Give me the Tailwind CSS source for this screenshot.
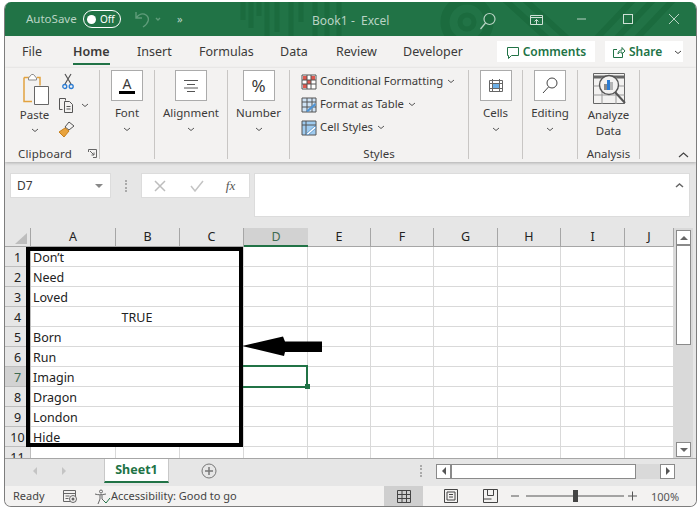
<!DOCTYPE html>
<html lang="en">
<head>
<meta charset="UTF-8" />
<title>Book1 - Excel</title>
<script src="https://cdn.jsdelivr.net/npm/@tailwindcss/browser@4"></script>
</head>
<body class="bg-white w-[700px] h-[511px] overflow-hidden font-['Noto_Sans',sans-serif] text-[#3b3a39]">
<div class="ml-[4px] mt-[2px] w-[693px] h-[505px] border border-[#7d7d7d] border-t-0 rounded-[7px] overflow-hidden flex flex-col bg-[#f3f2f1]">

  <!-- title bar -->
  <div class="relative h-[34px] shrink-0 bg-[#217346] flex items-center text-[12px] text-[#b9d3c4]">
    <svg class="absolute left-0 top-0" width="693" height="34" fill="none" stroke="#1b6b3e">
      <path d="M238 0v18M246 0v26M254 0v14M262 0v34M272 0v30M286 0v34M296 0v20M310 0v34M322 0v34M334 0v34" stroke-width="5"/>
      <circle cx="462" cy="20" r="22" stroke-width="9"/>
      <circle cx="462" cy="20" r="7" stroke-width="5"/>
      <path d="M500 -2l44 40M520 -2l44 40M590 38l40-42M610 38l40-42M630 38l40-42" stroke-width="6"/>
    </svg>
    <span class="relative ml-[21px] w-[57px] text-[11.500px]">AutoSave</span>
    <span class="relative w-[38px] h-[18px] rounded-full border-[1.5px] border-white flex items-center pl-[3px] gap-[4px] text-[10px] text-white"><i class="w-[9px] h-[9px] rounded-full bg-white"></i>Off</span>
    <svg class="relative ml-[13px]" width="32" height="20" fill="none" stroke="#5f9c7a" stroke-width="1.4"><path d="M2 3v6h6M2 9c3-4 7-5 10-3 4 3 3 8-3 12"/><path d="M22 9l2 2 2-2"/></svg>
    <span class="relative ml-[11px] text-[#b9d3c4] text-[11px]">»</span>
    <span class="absolute left-[307px] top-[10px]">Book1</span>
    <span class="absolute left-[346px] top-[10px]">-</span>
    <span class="absolute left-[352px] top-[10px] ml-[4px]">Excel</span>
    <svg class="absolute left-[474px] top-[10px]" width="18" height="20" fill="none" stroke="#b9d3c4" stroke-width="1.2"><circle cx="10.500" cy="7" r="5.500"/><path d="M6.500 11l-5 6"/></svg>
    <svg class="absolute left-[524px] top-[11px]" width="16" height="14" fill="none" stroke="#cfe0d6"><path d="M1.500 2.500h12v9h-12zM1.500 4.500h12M7.500 11V6.500M5.500 8.500l2-2 2 2"/></svg>
    <svg class="absolute left-[572px] top-[14px]" width="9" height="6" stroke="#b9d3c4"><path d="M0 3h9"/></svg>
    <svg class="absolute left-[617px] top-[11px]" width="12" height="12" fill="none" stroke="#cfe0d6"><rect x="1.500" y="1.500" width="9" height="9"/></svg>
    <svg class="absolute left-[663px] top-[11px]" width="12" height="12" stroke="#b9d3c4"><path d="M1 1l10 10M11 1L1 11"/></svg>
  </div>

  <!-- tabs -->
  <div class="relative h-[32px] shrink-0 flex items-center pt-[1px] text-[12.500px]">
    <span class="ml-[17px] w-[51px]">File</span>
    <span class="relative w-[64px] font-semibold">Home<i class="absolute left-0 top-[20px] w-[37px] h-[2px] bg-[#217346]"></i></span>
    <span class="w-[62px]">Insert</span>
    <span class="w-[81px]">Formulas</span>
    <span class="w-[56px]">Data</span>
    <span class="w-[67px]">Review</span>
    <span>Developer</span>
    <span class="absolute left-[492px] top-[5px] w-[98px] h-[21px] bg-white flex items-center justify-center pt-[1px] gap-[3px] text-[12px] font-semibold text-[#217346]">
      <svg width="14" height="13" fill="none" stroke="#217346"><path d="M1.500 1.500h11v8h-7l-3 3v-3h-1z"/></svg>Comments</span>
    <span class="absolute left-[600px] top-[5px] w-[78px] h-[21px] bg-white flex items-center pl-[7px] pt-[1px] gap-[3px] text-[12px] font-semibold text-[#217346]">
      <svg width="14" height="13" fill="none" stroke="#217346"><path d="M5 3.500H1.500v8h9V8M6 8c0-3 2-4 4-4V1.500l3 3.500-3 3V6c-2 0-3 .5-4 2z"/></svg>Share
      <svg class="ml-[9px]" width="8" height="5" fill="none" stroke="#444"><path d="M1 1l3 2.500L7 1"/></svg></span>
  </div>

  <!-- ribbon -->
  <div class="relative h-[94px] shrink-0 pt-[2px] flex text-[11.500px] shadow-[0_1px_3px_rgba(0,0,0,0.25)] z-10">
    <!-- clipboard -->
    <div class="relative w-[95px] h-[89px] border-r border-[#c8c6c4] flex flex-col">
      <div class="flex flex-1">
        <div class="w-[50px] flex flex-col items-center pl-[9px]">
          <svg class="mt-[3px] ml-[5px]" width="30" height="32" fill="none"><path d="M2 4.500h5M15 4.500h3v8M2 4.500v24h8" stroke="#e2a23f" stroke-width="1.500"/><path d="M6.500 5l3-3.500h2l3 3.500v2h-8z" fill="#fff" stroke="#8a8a8a"/><path d="M12.500 13.500h14v18h-14z" fill="#fff" stroke="#666"/></svg>
          <span class="mt-[1px] leading-[17px]">Paste</span>
          <svg class="mt-[5px]" width="8" height="5" fill="none" stroke="#555"><path d="M1 1l3 2.500L7 1"/></svg>
        </div>
        <div class="flex flex-col pl-[3px]">
          <svg class="mt-[3px] ml-[4px]" width="12" height="17" fill="none"><path d="M3 1l6 10M9 1L3 11" stroke="#555" stroke-width="1.200"/><circle cx="2.800" cy="13.500" r="2" stroke="#2b7cd3" stroke-width="1.300"/><circle cx="9.200" cy="13.500" r="2" stroke="#2b7cd3" stroke-width="1.300"/></svg>
          <div class="flex items-center mt-[7px]">
            <svg width="18" height="17" fill="none" stroke="#555"><path d="M4.500 12.500h-3v-11h6v2M6.500 4.500h5l3 3v8h-8zM8.500 9.500h4M8.500 12h4"/></svg>
            <svg class="ml-[5px]" width="8" height="5" fill="none" stroke="#555"><path d="M1 1l3 2.500L7 1"/></svg>
          </div>
          <svg class="mt-[7px]" width="18" height="17" fill="none"><path d="M11 1l5 4-5 4-4-3z" stroke="#555"/><path d="M7 7l4 3-5 6-5-5z" fill="#e8a33d" stroke="#c77f1a"/></svg>
        </div>
      </div>
      <div class="mt-auto h-[10px] leading-[10px] text-center pr-[14px] tracking-[0.2px]">Clipboard</div>
      <svg class="absolute left-[83px] top-[79px]" width="9" height="9" fill="none" stroke="#666"><path d="M.5 3V.5h8v8H5M2 2l4 4M6 3.500V6H3.500"/></svg>
    </div>
    <!-- font -->
    <div class="w-[55px] h-[89px] border-r border-[#c8c6c4] flex flex-col items-center">
      <div class="w-[32px] h-[31px] bg-white border border-[#ababab] flex flex-col items-center justify-center">
        <span class="text-[14px] leading-[14px]">A</span><i class="w-[16px] h-[3px] bg-black"></i>
      </div>
      <span class="mt-[3px] leading-[17px]">Font</span>
      <svg class="mt-[6px]" width="8" height="5" fill="none" stroke="#555"><path d="M1 1l3 2.500L7 1"/></svg>
    </div>
    <!-- alignment -->
    <div class="w-[73px] h-[89px] border-r border-[#c8c6c4] flex flex-col items-center">
      <div class="w-[32px] h-[31px] bg-white border border-[#ababab] flex items-center justify-center">
        <svg width="14" height="12" stroke="#555"><path d="M0 .5h14M3 4.500h8M0 8h14M3 11.500h8"/></svg>
      </div>
      <span class="mt-[3px] leading-[17px]">Alignment</span>
      <svg class="mt-[6px]" width="8" height="5" fill="none" stroke="#555"><path d="M1 1l3 2.500L7 1"/></svg>
    </div>
    <!-- number -->
    <div class="w-[62px] h-[89px] border-r border-[#c8c6c4] flex flex-col items-center">
      <div class="w-[32px] h-[31px] bg-white border border-[#ababab] flex items-center justify-center text-[17px]">%</div>
      <span class="mt-[3px] leading-[17px]">Number</span>
      <svg class="mt-[6px]" width="8" height="5" fill="none" stroke="#555"><path d="M1 1l3 2.500L7 1"/></svg>
    </div>
    <!-- styles -->
    <div class="w-[179px] h-[89px] border-r border-[#c8c6c4] flex flex-col pl-[11px] text-[11.300px]">
      <div class="h-[23px] flex items-center gap-[3px]">
        <svg width="16" height="16" fill="none"><path d="M1 1h14v14H1z" fill="#fff" stroke="#555"/><path d="M2 2h4v4H2zM10 2h4v4h-4zM6 6h4v4H6zM2 10h4v4H2z" fill="#e0584f"/><path d="M6 1v14M10 1v14M1 6h14M1 10h14" stroke="#555"/></svg>
        <span>Conditional Formatting</span><svg class="ml-[1px]" width="8" height="5" fill="none" stroke="#555"><path d="M1 1l3 2.500L7 1"/></svg>
      </div>
      <div class="h-[23px] flex items-center gap-[3px]">
        <svg width="16" height="16" fill="none"><path d="M1 1h14v14H1z" fill="#cfe3f5" stroke="#555"/><path d="M1 5h14M6 1v14M11 1v14M1 10h14" stroke="#555"/><path d="M5 14l9-8 1 2-8 7z" fill="#4f94d4"/></svg>
        <span>Format as Table</span><svg class="ml-[1px]" width="8" height="5" fill="none" stroke="#555"><path d="M1 1l3 2.500L7 1"/></svg>
      </div>
      <div class="h-[23px] flex items-center gap-[3px]">
        <svg width="16" height="16" fill="none"><path d="M1 1h14v14H1z" fill="#9fcbef" stroke="#555"/><path d="M1 5h14M5 1v14" stroke="#555"/><path d="M5 14l9-8 1 2-8 7z" fill="#fff" stroke="#3f7fbd" stroke-width=".7"/></svg>
        <span>Cell Styles</span><svg class="ml-[1px]" width="8" height="5" fill="none" stroke="#555"><path d="M1 1l3 2.500L7 1"/></svg>
      </div>
      <div class="mt-auto h-[10px] leading-[10px] text-center pr-[11px] text-[11.500px]">Styles</div>
    </div>
    <!-- cells -->
    <div class="w-[54px] h-[89px] border-r border-[#c8c6c4] flex flex-col items-center">
      <div class="w-[32px] h-[31px] bg-white border border-[#ababab] flex items-center justify-center">
        <svg width="16" height="15" fill="none"><path d="M1.500 2.500h13v11h-13z" stroke="#666"/><path d="M4.500 5.500h7v5h-7z" fill="#6cb0e8"/><path d="M4.500 1v13M11.500 1v13M1 5.500h14M1 10.500h14" stroke="#666"/></svg>
      </div>
      <span class="mt-[3px] leading-[17px]">Cells</span>
      <svg class="mt-[6px]" width="8" height="5" fill="none" stroke="#555"><path d="M1 1l3 2.500L7 1"/></svg>
    </div>
    <!-- editing -->
    <div class="w-[55px] h-[89px] border-r border-[#c8c6c4] flex flex-col items-center">
      <div class="w-[32px] h-[31px] bg-white border border-[#ababab] flex items-center justify-center">
        <svg width="16" height="17" fill="none" stroke="#444"><circle cx="10" cy="6" r="5"/><path d="M6.500 10L1 16"/></svg>
      </div>
      <span class="mt-[3px] leading-[17px]">Editing</span>
      <svg class="mt-[6px]" width="8" height="5" fill="none" stroke="#555"><path d="M1 1l3 2.500L7 1"/></svg>
    </div>
    <!-- analysis -->
    <div class="w-[62px] h-[89px] border-r border-[#c8c6c4] flex flex-col items-center leading-[16px]">
      <svg class="mt-[2px]" width="34" height="33" fill="none">
        <path d="M1.500 1.500h31v30h-31z" stroke="#666"/><path d="M1.500 5h31" stroke="#666" stroke-width="3"/><path d="M1.500 14h31M1.500 23h31M10 5v27M24 5v27" stroke="#999"/>
        <circle cx="17" cy="13" r="9.500" fill="#f3f2f1" stroke="#555" stroke-width="1.400"/>
        <path d="M12 12h3v6h-3z" fill="#8a8a8a"/><path d="M15 8h3v10h-3z" fill="#2b7cd3"/><path d="M18 10h3v8h-3z" fill="#b5b5b5"/>
        <path d="M23 20l10 11" stroke="#555" stroke-width="2"/>
      </svg>
      <span class="mt-[2px]">Analyze</span>
      <span>Data</span>
      <span class="mt-auto h-[10px] leading-[10px]">Analysis</span>
    </div>
    <svg class="absolute left-[673px] top-[83px]" width="11" height="7" fill="none" stroke="#444" stroke-width="1.200"><path d="M1 6l4.500-4L10 6"/></svg>
  </div>

  <!-- formula bar -->
  <div class="h-[66px] shrink-0 bg-[#e6e6e6] pt-[11px] pl-[5px] pr-[6px] flex items-start">
    <div class="w-[101px] h-[25px] bg-white border border-[#dcdcdc] flex items-center justify-between pl-[6px] pr-[7px] text-[12px]">D7<i class="border-x-[4px] border-x-transparent border-t-[4px] border-t-[#888]"></i></div>
    <div class="w-[30px] h-[25px] flex items-center justify-center"><i class="w-[2px] h-[12px] border-l-2 border-dotted border-[#aaa]"></i></div>
    <div class="w-[109px] h-[25px] bg-white border border-[#dcdcdc] flex items-center">
      <svg class="ml-[12px]" width="12" height="12" stroke="#bdbdbd" stroke-width="1.500"><path d="M1 1l10 10M11 1L1 11"/></svg>
      <svg class="ml-[24px]" width="14" height="12" fill="none" stroke="#c4c4c4" stroke-width="1.500"><path d="M1 6l4 5 8-10"/></svg>
      <span class="ml-[22px] font-['Liberation_Serif',serif] italic text-[13px] text-[#555]">fx</span>
    </div>
    <div class="relative ml-[4px] w-[437px] h-[44px] bg-white border border-[#dcdcdc]">
      <svg class="absolute right-[5px] top-[8px]" width="9" height="6" fill="none" stroke="#666" stroke-width="1.500"><path d="M1 5l3.500-3L8 5"/></svg>
    </div>
  </div>

  <!-- sheet -->
  <div class="relative h-[230px] shrink-0 bg-[#e6e6e6] flex">
    <div class="relative w-[669px] h-[230px] overflow-hidden">
      <div id="grid" class="grid grid-cols-[26px_85px_64px_64px_64px_63px_63px_64px_63px_64px_49px] grid-rows-[19px_repeat(11,20px)] text-[12.500px] text-[#222]"></div>
      <!-- selected cell -->
      <div class="absolute left-[238px] top-[137px] w-[65px] h-[23px] border-2 border-l-0 border-[#217346]"></div>
      <i class="absolute left-[300px] top-[156px] w-[5px] h-[5px] bg-[#217346]"></i>
      <!-- black highlight box -->
      <div class="absolute left-[21px] top-[19px] w-[217px] h-[200px] border-[4.500px] border-black"></div>
      <svg class="absolute left-[237px] top-[105px]" width="80" height="24"><path d="M0 13L41 3.500 43 8.500H80V19H43L42 23z" fill="#000"/></svg>
    </div>
    <!-- vertical scrollbar -->
    <div class="w-[19px] h-[230px] bg-[#d9d9d9] flex flex-col items-center pt-[2px]">
      <div class="w-[15px] h-[15px] bg-white border border-[#8a8a8a] flex items-center justify-center"><i class="border-x-[4px] border-x-transparent border-b-[4px] border-b-[#666]"></i></div>
      <div class="w-[15px] h-[100px] bg-white border border-[#8a8a8a]"></div>
      <div class="mt-auto mb-[1px] w-[15px] h-[15px] bg-white border border-[#8a8a8a] flex items-center justify-center"><i class="border-x-[4px] border-x-transparent border-t-[4px] border-t-[#666]"></i></div>
    </div>
  </div>

  <!-- sheet tabs -->
  <div class="relative h-[28px] shrink-0 bg-[#e6e6e6] border-t border-[#a6a6a6] flex items-center pb-[3px]">
    <i class="ml-[28px] border-y-[4px] border-y-transparent border-r-[4px] border-r-[#c4c4c4]"></i>
    <i class="ml-[25px] border-y-[4px] border-y-transparent border-l-[4px] border-l-[#c4c4c4]"></i>
    <div class="ml-[38px] w-[65px] h-[24px] bg-white border-b-2 border-x border-[#217346] border-x-[#c8c8c8] flex items-center justify-center text-[12.500px] font-bold text-[#217346]">Sheet1</div>
    <svg class="ml-[32px]" width="16" height="16" fill="none" stroke="#777"><circle cx="8" cy="8" r="7"/><path d="M4 8h8M8 4v8" stroke-width="1.500"/></svg>
    <i class="ml-[203px] w-[2px] h-[12px] border-l-2 border-dotted border-[#aaa]"></i>
    <div class="ml-[14px] w-[15px] h-[15px] bg-white border border-[#8a8a8a] flex items-center justify-center"><i class="border-y-[4px] border-y-transparent border-r-[4px] border-r-[#555]"></i></div>
    <div class="w-[185px] h-[15px] bg-white border border-[#8a8a8a]"></div>
    <div class="w-[24px] h-[15px] bg-[#d9d9d9]"></div>
    <div class="w-[15px] h-[15px] bg-white border border-[#8a8a8a] flex items-center justify-center"><i class="border-y-[4px] border-y-transparent border-l-[4px] border-l-[#555]"></i></div>
  </div>

  <!-- status bar -->
  <div class="relative flex-1 bg-[#f3f2f1] flex items-center pt-[1px] text-[11px] text-[#444]">
    <span class="ml-[8px] w-[49px]">Ready</span>
    <svg width="16" height="15" fill="none" stroke="#666"><path d="M1.500 1.500h12v11h-12zM1.500 4.500h12M3.500 7h4M3.500 9.500h3"/><circle cx="11" cy="10" r="3.500" fill="#f3f2f1"/><circle cx="11" cy="10" r="1.500" fill="#666" stroke="none"/></svg>
    <svg class="ml-[16px]" width="17" height="16" fill="none" stroke="#666"><circle cx="7" cy="2.500" r="1.500"/><path d="M1 5c3 1 6 1 11 0M6 6v4l-2 5M8 6v4l2 2"/><path d="M10 12l2 2 4-5" stroke="#217346"/></svg>
    <span>Accessibility: Good to go</span>
    <div class="absolute left-[379px] top-0 w-[39px] h-full bg-[#cfcfcf] flex items-center justify-center">
      <svg width="14" height="13" fill="none" stroke="#444"><path d="M.5.500h13v12H.500zM5 .500v12M9.500.500v12M.5 4.500h13M.5 8.500h13"/></svg>
    </div>
    <svg class="absolute left-[439px] top-[3px]" width="14" height="14" fill="none" stroke="#444"><path d="M.5.500h13v13H.500zM3 3h8v8H3zM5 5.500h4M5 8h4"/></svg>
    <svg class="absolute left-[478px] top-[3px]" width="15" height="14" fill="none" stroke="#444"><path d="M.5.500h14v13H.500zM4.500.500v6h6v-6M.5 10h8"/></svg>
    <svg class="absolute left-[506px] top-[4px]" width="165" height="12" stroke="#555"><path d="M0 6h8M15 6h98"/><rect x="62" y="0" width="5" height="12" fill="#444" stroke="none"/><path d="M117 6h9M121.500 1.500v9"/></svg>
    <span class="absolute left-[646px] top-[3px] text-[#555]">100%</span>
  </div>
</div>
<script>
  // spreadsheet cells: A:C are merged across on rows 1-10
  var cols = ['A','B','C','D','E','F','G','H','I','J'];
  var values = ['Don’t','Need','Loved','TRUE','Born','Run','Imagin','Dragon','London','Hide',''];
  var line = ' border-b border-r border-[#d9d9d9] bg-white';
  var html = '<div class="relative bg-[#e6e6e6] border-r border-b border-[#a6a6a6]"><i class="absolute left-[10px] top-[5px] border-l-[12px] border-l-transparent border-b-[11px] border-b-[#bdbdbd]"></i></div>';
  cols.forEach(function (c) {
    var cls = c === 'D'
      ? 'bg-[#d2d2d2] border-b-2 border-[#217346] text-[#3f6b52]'
      : 'bg-[#e6e6e6] border-b border-r border-[#a6a6a6]';
    html += '<div class="flex items-center justify-center pt-[1px] ' + cls + '">' + c + '</div>';
  });
  values.forEach(function (v, i) {
    var r = i + 1;
    var head = r === 7 ? 'bg-[#d2d2d2] text-[#3f6b52]' : 'bg-[#e6e6e6]';
    html += '<div class="flex items-center justify-center pt-[3px] border-b border-r border-[#bdbdbd] h-[20px] ' + head + '">' + r + '</div>';
    if (r <= 10) {
      var align = v === 'TRUE' ? ' justify-center' : ' pl-[2px]';
      html += '<div class="col-span-3 h-[20px] flex items-center pt-[3px]' + align + line + '">' + v + '</div>';
    } else {
      html += '<div class="' + line + '"></div><div class="' + line + '"></div><div class="' + line + '"></div>';
    }
    for (var k = 3; k < 10; k++) html += '<div class="' + line + '"></div>';
  });
  document.getElementById('grid').innerHTML = html;
</script>
</body>
</html>
